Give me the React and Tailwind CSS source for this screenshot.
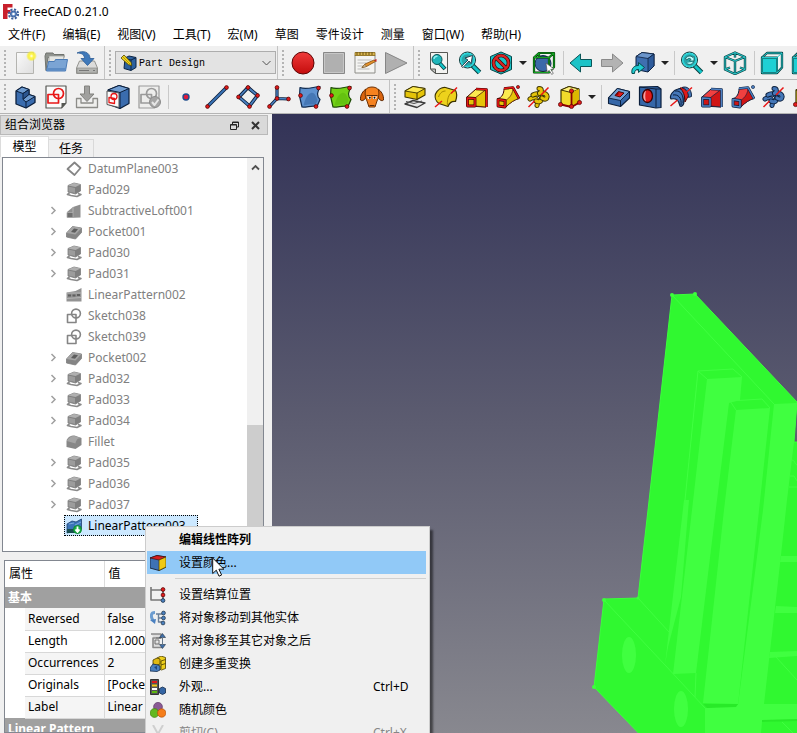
import React from "react";

/* ---------- icons ---------- */

const Svg = ({ children, s = 24, cls = "" }) => (
  <svg width={s} height={s} viewBox={`0 0 ${s} ${s}`} fill="none" strokeLinejoin="round" className={`block shrink-0 ${cls}`} aria-hidden="true">
    {children}
  </svg>
);

const Dot = ({ x, y, r = 1.9, f = "#e01b1b", s = "#4a0000" }) => (
  <circle cx={x} cy={y} r={r} fill={f} stroke={s} strokeWidth="0.7" />
);

const AppLogo = () => (
  <Svg s={16}>
    <path d="M0 0h9.500v3.500h-5v2.500h3v3.300h-3v5.700h-4.500z" fill="#c8202c" />
    <circle cx="10.500" cy="10" r="4.600" fill="none" stroke="#3c5f9c" strokeWidth="2" strokeDasharray="2.100 1.500" />
    <circle cx="10.500" cy="10" r="3" fill="#5f88c4" stroke="#355a99" />
    <circle cx="10.500" cy="10" r="1.300" fill="#fff" />
  </Svg>
);

const NewDoc = () => (
  <Svg>
    <defs>
      <linearGradient id="paper" x1="0" y1="0" x2="1" y2="1"><stop stopColor="#fafafa" /><stop offset="1" stopColor="#dedede" /></linearGradient>
      <radialGradient id="glow"><stop stopColor="#fffff0" /><stop offset=".35" stopColor="#fff64a" /><stop offset=".65" stopColor="#f7ee30" stopOpacity=".8" /><stop offset="1" stopColor="#f7ee30" stopOpacity="0" /></radialGradient>
    </defs>
    <path d="M3.500 1.500h17v21h-17z" fill="url(#paper)" stroke="#b4b4b0" />
    <circle cx="18.500" cy="5" r="5.500" fill="url(#glow)" />
  </Svg>
);

const Folder = () => (
  <Svg>
    <path d="M1 5l1-3h7l1 1.500h10v3h-16l-2 13z" fill="#8e918c" stroke="#70736e" />
    <path d="M5 5h15l-1 7h-14z" fill="#e4e5e2" stroke="#9a9c98" strokeWidth=".7" />
    <path d="M2.500 20l2-9.500h6l1-2h12l-2 11.500z" fill="#7ba4d4" stroke="#4a7ab5" />
    <path d="M3.500 17h18.300l-.6 2.400h-18z" fill="#5d8cc4" />
  </Svg>
);

const Save = () => (
  <Svg>
    <path d="M4.500 10h15l3 7v5.500h-21v-5.500z" fill="#dcdcdb" stroke="#94948f" />
    <path d="M2 17h20v5h-20z" fill="#b3b4b1" stroke="#8c8d89" strokeWidth=".7" />
    <path d="M4 19.500h10M18 19.500h2" stroke="#777" />
    <path d="M2 2c6-3 13-1 13 5.500h4l-6.500 7-6.500-7h3.500c0-4-3-5.500-7.500-5.500z" fill="#3f79ba" stroke="#2b5a94" strokeWidth=".8" />
  </Svg>
);

const Combo = () => (
  <Svg s={17}>
    <path d="M5 4l4-2 7 1.500v10l-5 3-7-2z" fill="#2d619f" stroke="#0b2444" />
    <path d="M11 6l5-2.300M11 6v10M11 6l-6-1.500" stroke="#0b2444" />
    <path d="M1 4l3-3 7 7.500.8 3-3.300-.8z" fill="#f4d61c" stroke="#4d4200" strokeWidth=".8" />
    <path d="M3 3l7 7" stroke="#9a8200" strokeWidth=".7" />
  </Svg>
);

const Record = () => (
  <Svg>
    <defs><linearGradient id="rec" x1="0" y1="0" x2="0" y2="1"><stop stopColor="#ef3b3b" /><stop offset="1" stopColor="#c40c0c" /></linearGradient></defs>
    <circle cx="12" cy="12" r="11" fill="url(#rec)" stroke="#5c0505" />
  </Svg>
);
const Stop = () => (
  <Svg><path d="M1.500 1.500h21v21h-21z" fill="#b0b0b0" stroke="#888" /><path d="M2.500 2.500h19v19h-19z" stroke="#c6c6c6" /></Svg>
);
const EditMacro = () => (
  <Svg>
    <path d="M2 4h20v18h-20z" fill="#f4f4f2" stroke="#8d8d88" />
    <path d="M2 1.500h20v3h-20z" fill="#d8b550" stroke="#8a6914" strokeWidth=".8" />
    <path d="M4 1v3M7 1v3M10 1v3M13 1v3M16 1v3M19 1v3" stroke="#6b5314" />
    <path d="M4.500 9h14M4.500 12h9M4.500 15h6M4.500 18h12" stroke="#bbb" />
    <path d="M9 16.500l3-3.500 9-4 1.500 1.500-9 5z" fill="#e8932a" stroke="#7d4a10" strokeWidth=".8" />
    <path d="M9 16.500l3-3 1.500 2z" fill="#f0d9b0" stroke="#6d542a" strokeWidth=".6" />
    <path d="M21 9l2.500-1v3z" fill="#cc1c1c" />
  </Svg>
);
const Play = () => (
  <Svg><path d="M1.500 1.500l21.500 10.500-21.500 10.500z" fill="#b0b0b0" stroke="#868686" /></Svg>
);

const Lens = ({ arrow, refresh }) => (
  <Svg>
    <path d="M14 14l7.500 7.500" stroke="#063c3d" strokeWidth="5" />
    <path d="M14 14l7.500 7.500" stroke="#12c4c8" strokeWidth="3" />
    <circle cx="9.500" cy="9" r="8" fill="#9adadb" stroke="#063c3d" strokeWidth="1" />
    <circle cx="9.500" cy="9" r="6.600" fill="#2aa5a9" stroke="#25d6da" strokeWidth="1.500" />
    {arrow && <path d="M3.500 15.500l6.500-6.500-3-2 7.500-2.500-1.500 8-2-2.500-6 6.500z" fill="#fff" stroke="#123" strokeWidth=".8" />}
    {refresh && <path d="M5.500 8c1-3 5-4 7.500-1.500l1-1v4.500h-4.500l1.500-1.700c-1.500-1.500-3.500-1-4 .7zM13.500 10.500c-1 3-4.500 4-7 1.500" fill="#bff" stroke="#0b5456" strokeWidth=".8" />}
  </Svg>
);

const FitAll = () => (
  <Svg>
    <path d="M3.500 1.500h17v21h-12l-5-4.500z" fill="#f3f3f1" stroke="#555753" />
    <path d="M3.500 18h5v4.500z" fill="#c0c1be" stroke="#555753" />
    <path d="M12.500 12l5.500 6" stroke="#063c3d" strokeWidth="4" />
    <path d="M12.500 12l5 5.500" stroke="#12c4c8" strokeWidth="2.400" />
    <circle cx="10" cy="8.500" r="5" fill="#1fb6ba" stroke="#0a5254" />
    <path d="M7 8a3.200 3.200 0 013.500-2.700" stroke="#96eef0" strokeWidth="1.300" />
  </Svg>
);

const DrawStyle = () => (
  <Svg>
    <path d="M12 1l10.500 4.500v13l-10.500 4.500-10.500-4.500v-13z" fill="#19c3c7" stroke="#064446" />
    <circle cx="12" cy="12" r="7.500" stroke="#3d0000" strokeWidth="3.600" />
    <path d="M6.500 6.500l11 11" stroke="#3d0000" strokeWidth="3.600" />
    <circle cx="12" cy="12" r="7.500" stroke="#d92626" strokeWidth="2.300" />
    <path d="M6.800 6.800l10.400 10.400" stroke="#d92626" strokeWidth="2.300" />
  </Svg>
);

const BoxSelect = () => (
  <Svg>
    <circle cx="11" cy="12.500" r="8" fill="#3b69a8" stroke="#0f2b52" />
    <path d="M2 6.500h15v15h-15zM2 6.500l5-4.500h15l-5 4.500M22 2v14l-5 5.500M7 2v4" stroke="#032b06" strokeWidth="2.200" />
    <path d="M2 6.500h15v15h-15zM2 6.500l5-4.500h15l-5 4.500M22 2v14l-5 5.500M7 2v4" stroke="#13a321" strokeWidth="1.200" />
    <path d="M14 12l8 6-3.200.4 2.500 4-1.600 1-2.500-4-2 1.800z" fill="#fff" stroke="#555" strokeWidth=".7" />
  </Svg>
);

const ArrowL = () => (
  <Svg><path d="M1 12l10.500-9v5.500h11v7h-11v5.500z" fill="#1cc3c7" stroke="#0a5557" /></Svg>
);
const ArrowR = () => (
  <Svg><path d="M23 12l-10.500-9v5.500h-11v7h11v5.500z" fill="#b3b3b3" stroke="#8a8a8a" /></Svg>
);

const LinkGo = () => (
  <Svg>
    <path d="M5 5.500l6-4 12 1.500v12l-6 6-12-2.500z" fill="#3f6fb0" stroke="#0c2140" />
    <path d="M5 5.500l6-4 12 1.500-6 4.500z" fill="#6b95cb" stroke="#0c2140" strokeWidth=".8" />
    <path d="M17 7.500l6-4.500v12l-6 6z" fill="#2f5c9c" stroke="#0c2140" strokeWidth=".8" />
    <path d="M1 22.500c-1-5 2-8 6.500-8v-3l6 5-6 5v-3c-3 0-4 1.500-4 4z" fill="#1ecbcf" stroke="#064c4e" />
  </Svg>
);

const IsoView = () => (
  <Svg>
    <path d="M12 1.500l10 4.500v12.500l-10 4.500-10-4.500v-12.500zM2 6l10 4 10-4M12 10v13M12 1.500v5M2 18.500l5-2M22 18.500l-5-2" stroke="#063c3d" strokeWidth="2.400" />
    <path d="M12 1.500l10 4.500v12.500l-10 4.500-10-4.500v-12.500zM2 6l10 4 10-4M12 10v13M12 1.500v5M2 18.500l5-2M22 18.500l-5-2" stroke="#2cc3c6" strokeWidth="1.100" />
  </Svg>
);
const FrontView = () => (
  <Svg>
    <path d="M2 6.500l5-4.500h15v14.500l-5 5.500h-15z" fill="#f0f6f6" stroke="#063c3d" strokeWidth="2.300" />
    <path d="M2 6.500h15v15.500h-15z" fill="#1fd0d4" stroke="#063c3d" strokeWidth="2" />
    <path d="M2 6.500l5-4.500h15v14.500l-5 5.500h-15zM2 6.500h15v15.500M17 6.500l5-4.500" stroke="#27c9cc" strokeWidth="1" />
  </Svg>
);

const Body = () => (
  <Svg>
    <path d="M3 6l6-4 7 2.500v5l6 2v6l-9 5.500-10-4z" fill="#3a6cae" stroke="#0b1f3c" strokeWidth="1.300" />
    <path d="M3 6l6-4 7 2.500-6 4z" fill="#6e9bd0" stroke="#0b1f3c" />
    <path d="M10 8.500v6l6-5v-5z" fill="#2c5690" stroke="#0b1f3c" />
    <path d="M10 14.500l6-5 6 2-9 5.500z" fill="#6e9bd0" stroke="#0b1f3c" />
    <path d="M13 17v6" stroke="#0b1f3c" />
  </Svg>
);

const SketchNew = ({ gray }) => (
  <Svg>
    <path d="M2 1h20v17l-4.500 5h-15.500z" fill={gray ? "#ededec" : "#fafafa"} stroke={gray ? "#999" : "#555753"} strokeWidth="1.200" />
    {!gray && <path d="M17.500 23v-5h4.500z" fill="#555753" />}
    <circle cx="14.500" cy="8.500" r="5" stroke={gray ? "#9a9a9a" : "#e81717"} strokeWidth="1.700" />
    <path d="M4 9.500h10.500v8.500h-10.500z" stroke={gray ? "#9a9a9a" : "#e81717"} strokeWidth="1.700" />
    {gray && <><circle cx="18" cy="17" r="5.500" fill="#a5a5a5" stroke="#8b8b8b" /><path d="M15 17l2.500 3 4-5.500" stroke="#e6e6e6" strokeWidth="2" /></>}
  </Svg>
);
const ImportIcon = () => (
  <Svg>
    <path d="M1.500 13.500h4.500v4.500h12v-4.500h4.500v9h-21z" fill="#eeeeec" stroke="#8c8c88" strokeWidth="1.300" />
    <path d="M9.500 1h5v8h4.500l-7 7.500-7-7.500h4.500z" fill="#a0a09e" stroke="#82827f" />
  </Svg>
);
const MapSketch = () => (
  <Svg>
    <path d="M2 5l11-4.500 10 3v15l-9 5-11-4z" fill="#3a6cae" stroke="#0b1f3c" strokeWidth="1.200" />
    <path d="M2 5l11-4.500 10 3-9 4z" fill="#709dd2" stroke="#0b1f3c" />
    <path d="M14 7.500v16" stroke="#0b1f3c" />
    <path d="M1 6l12 2v14.500l-12-3z" fill="#fafafa" stroke="#555" />
    <circle cx="8" cy="11.500" r="3" stroke="#e81717" strokeWidth="1.300" />
    <path d="M3 12.500l5.500 1v5l-5.500-1z" stroke="#e81717" strokeWidth="1.300" />
  </Svg>
);

const Point = () => (
  <Svg><circle cx="12" cy="12" r="3.700" fill="#1f4e8c" /><circle cx="12" cy="12" r="2.300" fill="#e01b3b" /></Svg>
);
const LineI = () => (
  <Svg>
    <path d="M3 21l18-18" stroke="#0b1f3c" strokeWidth="3.600" /><path d="M3 21l18-18" stroke="#3a74b8" strokeWidth="1.800" />
    <Dot x={2.500} y={21.500} /><Dot x={21.500} y={2.500} />
  </Svg>
);
const Plane = () => (
  <Svg>
    <path d="M12 2.500l9.500 8-8 10.500-10.500-9z" stroke="#0b1f3c" strokeWidth="3.600" /><path d="M12 2.500l9.500 8-8 10.500-10.500-9z" stroke="#4a80c0" strokeWidth="1.800" />
    <Dot x={12} y={2.500} /><Dot x={21.500} y={10.500} /><Dot x={13.500} y={21.500} /><Dot x={2.500} y={12} />
  </Svg>
);
const Axes = () => (
  <Svg>
    <path d="M10 2.500v11l11.500.500M10 13.500l-7.500 8" stroke="#0b1f3c" strokeWidth="3.200" /><path d="M10 2.500v11l11.500.500M10 13.500l-7.500 8" stroke="#4a80c0" strokeWidth="1.500" />
    <Dot x={10} y={2.500} /><Dot x={21.500} y={14} /><Dot x={2.500} y={21.500} /><Dot x={10} y={13.500} />
  </Svg>
);
const Binder = ({ green }) => (
  <Svg>
    <path d="M2 2.500c6 2.500 13-.5 20-1-2.500 6-4 9 0 13l-3 7c-5-1.500-10 1-15 .5l-2.500-11z" fill={green ? "#73d216" : "#5f92cf"} stroke={green ? "#1c4a04" : "#0f2a50"} strokeWidth="1.200" />
    <path d="M13 8c4-1 5 4 6.500 7l-2 5c-4-1-9 0-12 .5 1-4 3-11 7.500-12.500z" fill={green ? "#5cb80d" : "#3465a4"} opacity=".6" />
    <Dot x={2.500} y={10.500} /><Dot x={20.500} y={3} /><Dot x={18} y={21.500} />
  </Svg>
);
const Sheep = () => (
  <Svg>
    <path d="M6 4c-3 2-6 6-5.500 11 2 2 5-1 6.500-4zM18 4c3 2 6 6 5.500 11-2 2-5-1-6.500-4z" fill="#d9640f" stroke="#5c2804" />
    <path d="M5.500 5c2-4 11-4 13 0 1 4 0 8-1.500 11l-2 6h-6l-2-6c-1.500-3-2.500-7-1.500-11z" fill="#f58220" stroke="#6b3004" />
    <path d="M7 11.500h4v2.500h-3zM13 11.500h4l-1 2.500h-3z" fill="#fff" />
    <path d="M6.500 10.500h11" stroke="#5c2804" />
    <circle cx="9.800" cy="12.800" r="1" fill="#111" /><circle cx="14.500" cy="12.800" r="1" fill="#111" />
    <path d="M9.500 20.500h5" stroke="#5c2804" />
  </Svg>
);

const Pad = () => (
  <Svg>
    <path d="M2 19l8-3.500 12 2.500-8 4.500z" fill="#e6e6e6" stroke="#3b3b3b" strokeWidth="1.400" />
    <path d="M3 16.500l8 2 8-2.500" stroke="#555" strokeWidth="1.200" />
    <path d="M2 6l8-4.500 12 2v6.500l-8 4.500-12-2.500z" fill="#e5c409" stroke="#3c3300" strokeWidth="1.100" />
    <path d="M2 6l8-4.500 12 2-8 4.500z" fill="#fce94f" stroke="#3c3300" strokeWidth=".9" /><path d="M14 8v6.500" stroke="#3c3300" />
  </Svg>
);
const Revolve = () => (
  <Svg>
    <path d="M1.500 9c2-4 6-7 10-6.500l10 3c2 3 1 8 0 11-4-.5-6 1-7.500 5l-9-3c-3-2-4.500-6-3.500-9.500z" fill="#edd21c" stroke="#3c3300" strokeWidth="1.200" />
    <path d="M11.500 6c-4 0-6 3-7 6M21.500 6c-5 0-9 6-8 15" stroke="#a68b00" />
    <path d="M1 22l7-6M17 8.500l6-6" stroke="#e81717" strokeWidth="1.500" />
  </Svg>
);
const Loft = ({ c = "#e5c409", hi = "#fce94f", e = "#e81717", k = "#3c0000" }) => (
  <Svg>
    <path d="M2 12l9-8 10 .5v17.500l-19-1z" fill={hi} stroke={k} />
    <path d="M10 13l11-8.500v17.500l-11-1z" fill={c} />
    <path d="M10 13l11-8.500M10 21l11 1" stroke={k} strokeWidth=".7" />
    <path d="M11 4l10.500.5v17.500" stroke={k} strokeWidth="2.600" /><path d="M11 4l10.500.5v17.500" stroke={e} strokeWidth="1.500" />
    <path d="M2.500 13l7.500.5v7.500h-7.500z" stroke={k} strokeWidth="2.800" fill={c} /><path d="M2.500 13l7.500.5v7.500h-7.500z" stroke={e} strokeWidth="1.600" />
  </Svg>
);
const Pipe = ({ c = "#e5c409", hi = "#fce94f", e = "#e81717", k = "#3c0000" }) => (
  <Svg>
    <path d="M8 3.500l9-1 6 11c-4 1-9 4-13 8.500l-8-8.500c4-1 6-5 6-10z" fill={hi} stroke={k} />
    <path d="M17 2.500l6 11c-4 1-9 4-13 8.500v-7c4-2 7-7 7-12.500z" fill={c} stroke={k} strokeWidth=".6" />
    <path d="M8 3.500l9-1 6 11" stroke={k} strokeWidth="2.600" /><path d="M8 3.500l9-1 6 11" stroke={e} strokeWidth="1.500" />
    <path d="M2 14.500l7 1v6.500l-7-1z" fill={c} stroke={k} strokeWidth="2.800" /><path d="M2 14.500l7 1v6.500l-7-1z" stroke={e} strokeWidth="1.600" />
    <circle cx="22" cy="2" r="1.600" fill={e} stroke={k} strokeWidth=".6" />
  </Svg>
);
const Helix = ({ c = "#e5c409", k = "#3c3300" }) => {
  const coils = ["M3 14c4-3 9 0 7 6.500", "M6 10c5-3 11 1 8 5.500-1 1.500-3 1.500-5 .5", "M12 3.500c3 0 3 3 .5 5M12.500 8c5-1 9 2 7 5.500-1 1-3 .5-4.500-.5"];
  return (
    <Svg>
      {coils.map((d) => (
        <g key={d} strokeLinecap="round"><path d={d} stroke={k} strokeWidth="5" /><path d={d} stroke={c} strokeWidth="3.200" /></g>
      ))}
      <path d="M1.500 22l6-6M14 10l7.500-7.500" stroke="#e81717" strokeWidth="1.500" />
    </Svg>
  );
};
const PrimBox = () => (
  <Svg>
    <path d="M3 5l8-3.500 10 2.500v14l-8 4-10-2.500z" fill="#f2da2b" stroke="#3c3300" strokeWidth="1.200" />
    <path d="M3 5l8-3.500 10 2.500-8 3.500z" fill="#fdf07a" stroke="#3c3300" /><path d="M13 7.500l8-3.500v14l-8 4z" fill="#dcb900" />
    <path d="M13.500 6v15M3 19.500l10.500 2.500 8-4.500" stroke="#8b0000" strokeWidth="1.800" />
    <Dot x={13.500} y={6} r={2.100} /><Dot x={2.500} y={19.500} r={2.100} /><Dot x={13.500} y={21.500} r={2.100} /><Dot x={21.500} y={17.500} r={2.100} />
  </Svg>
);
const PocketI = () => (
  <Svg>
    <path d="M1.500 13l9-9.500 12 3v6.500l-9 8.500-12-3z" fill="#3667a8" stroke="#0b1f3c" strokeWidth="1.100" />
    <path d="M1.500 13l9-9.500 12 3-9 9z" fill="#739fd3" stroke="#0b1f3c" strokeWidth=".9" /><path d="M13.500 15.500v6" stroke="#0b1f3c" />
    <path d="M8 10.500l3.500-4 5.500 1.500-4 4z" fill="#e01b1b" stroke="#3c0000" strokeWidth=".9" /><path d="M8 10.500l3.500-4v3z" fill="#8b0000" />
  </Svg>
);
const Hole = () => (
  <Svg>
    <path d="M1.500 2l18-.5 3.500 2.500v18.500l-5 .5-16.500-3z" fill="#3667a8" stroke="#0b1f3c" strokeWidth="1.200" />
    <path d="M18 4v18.500M1.500 2l16.500 2h5" stroke="#0b1f3c" />
    <ellipse cx="9.500" cy="11" rx="5" ry="6.500" fill="#e01b1b" stroke="#3c0000" strokeWidth="1.300" /><path d="M8 5.500c-3 2-4 9 0 11-1-4-1-7 0-11z" fill="#fff" opacity=".6" />
  </Svg>
);
const Groove = () => (
  <Svg>
    <path d="M9 4c3-1 6 1 7 4l-1 8c0 4-2 6-4 5-1-6-4-8-9-7-2-3 2-9 7-10z" fill="#4577b8" stroke="#0b1f3c" strokeWidth="1.200" />
    <path d="M4 10c5-1 9 3 8 10M6 6c6-1 9 5 8 12" stroke="#0b1f3c" />
    <path d="M11 3c4-1 8 1 9 7l-4 7c0-7-2-11-5-14z" fill="#e01b1b" stroke="#4a0000" strokeWidth=".9" />
    <path d="M13 2.500c5-2 10 2 9.500 9l-3 1c0-5-2-8-6.500-10z" fill="#4577b8" stroke="#0b1f3c" strokeWidth=".9" />
    <path d="M1.500 21l7-6M17 7.500l6-5" stroke="#e81717" strokeWidth="1.500" />
  </Svg>
);

/* ---------- small tree icons ---------- */

const T = ({ k }) => {
  const st = "#7d7d7d";
  const kinds = {
    plane: <path d="M8.500 1.500l6 5.500-6 7-7-6z" stroke="#858585" strokeWidth="1.800" />,
    pad: (
      <>
        <path d="M3.500 11l-2 1.500 3.500 1 6 1 4-2-3-1" stroke="#8a8a8a" strokeWidth="1.600" />
        <path d="M2 3.500l6-2.500 6.500 1.500v6.500l-5 3-7.500-2z" fill="#7f7f7f" stroke={st} strokeWidth=".8" />
        <path d="M2 3.500l6-2.500 6.500 1.500-5 2.500z" fill="#b0b0b0" /><path d="M2.500 4.500l6.500 1.500v5l-6.500-1.500z" fill="#9c9c9c" />
      </>
    ),
    loft: <><path d="M1 9l6-5 7.500-2.500v13l-13 .500z" fill="#8f8f8f" /><path d="M1 9.500h6v5h-6z" fill="#6f6f6f" stroke="#adadad" strokeWidth=".8" /><path d="M7 4v5.500" stroke="#b4b4b4" /></>,
    pocket: (
      <>
        <path d="M.5 9l6-6.500 9 1.500v4.500l-6 6.500-9-2z" fill="#858585" stroke={st} strokeWidth=".8" />
        <path d="M.5 9l6-6.500 9 1.500-6 6.500z" fill="#a5a5a5" /><path d="M5 8l3-3.500 4 .8-3 3.500z" fill="#5d5d5d" />
      </>
    ),
    pattern: (
      <>
        <path d="M.5 5.500l9-1.500 6-3v13.500h-15z" fill="#939393" />
        <path d="M1 6h14M1 11.500l14-1" stroke="#b4b4b4" />
        <path d="M2 8.500h3M6.500 8.500h3M11 8h3" stroke="#5f5f5f" strokeWidth="2" />
      </>
    ),
    sketch: <><circle cx="10" cy="5.500" r="4.400" stroke="#858585" strokeWidth="1.600" /><path d="M1.500 6.500h8.500v8h-8.500z" stroke="#858585" strokeWidth="1.600" /></>,
    fillet: <><path d="M.5 7c1-4 4-5.500 8-5.500l7 2.500v7l-6 4-9-2z" fill="#878787" /><path d="M.8 7c1.500-3 4-5 7.700-5l6.500 2c-4 0-5 3-5.500 5.500z" fill="#a5a5a5" /></>,
    active: (
      <>
        <path d="M1 6l5-3 4 1 5.500-3v10l-14.500 4z" fill="#3a74b8" stroke="#1d3f70" strokeWidth=".8" />
        <path d="M1 11h9v4h-9z" fill="#184f52" /><path d="M3 6l5-1M9 7l6-3" stroke="#7aa8dc" />
        <circle cx="11.500" cy="11.500" r="4" fill="#1cae45" stroke="#0d8a30" /><path d="M11.500 8.500v5M9.500 11.500l2 2.500 2-2.500" stroke="#fff" strokeWidth="1.800" />
      </>
    ),
  };
  return <Svg s={16}>{kinds[k]}</Svg>;
};

/* ---------- context-menu icons ---------- */

const menuIcons = {
  color: <><path d="M0 3l7-2.500 9 1.500v10l-7 3.500-9-2.500z" fill="#3e72b4" stroke="#1b2c45" /><path d="M0 3l7-2.500 9 1.500-7 3z" fill="#d81e1e" stroke="#451010" strokeWidth=".7" /><path d="M9 5l7-3v10l-7 3.500z" fill="#f0c914" stroke="#4a3c00" strokeWidth=".7" /></>,
  tip: <><path d="M1 0v3M1 3h11M1 3v10h10" stroke="#777" strokeWidth="1.600" /><path d="M13 2v11" stroke="#555" strokeWidth="1.400" /><Dot x={13} y={2.500} /><Dot x={13} y={8} /><Dot x={13} y={13.500} f="#4a80c0" s="#123" /></>,
  move: <><path d="M5 2.500c-5 0-4 5-2 8" stroke="#6d9dd0" strokeWidth="3" /><path d="M0 10l6-1-1 5z" fill="#4a80c0" /><path d="M6 4h6M8.500 4v8h4M8.500 8h4" stroke="#6a7f98" strokeWidth="1.400" /><Dot x={13.500} y={3} f="#4a80c0" s="#234" /><Dot x={13.500} y={8} f="#4a80c0" s="#234" /><Dot x={13} y={13} f="#4a80c0" s="#234" /></>,
  after: <><path d="M1 1h10v4h-8v9.500h9" stroke="#8a8a8a" strokeWidth="1.600" fill="#ddd" /><path d="M5 7h4v4h-4zM6 5h5" stroke="#707070" /><path d="M12.500.5l3 4h-6zM12.500 15.500l3-4h-6z" fill="#3f6ea8" stroke="#234" strokeWidth=".6" /><path d="M12.500 4v8" stroke="#678" /></>,
  multi: <><path d="M7 2l4-2 4.500 1.500v11l-4 1.500-5-2z" fill="#edcf1c" stroke="#4a3c00" strokeWidth=".8" /><path d="M3 4l4-2 3 1v5l-4 1.500-3-1.500z" fill="#e0b912" stroke="#4a3c00" strokeWidth=".8" /><path d="M11 5l4.500-1.500M11 9l4.500-1.500M11 5v8" stroke="#4a3c00" strokeWidth=".8" /><path d="M0 12l3-4 5 1 2 1v4l-3 1.500-7-.5z" fill="#4a80c0" stroke="#12294a" strokeWidth=".8" /><path d="M4 11l3-1v4z" fill="#1f477c" /></>,
  look: <><path d="M.5.5h8v15h-8z" fill="#555" stroke="#333" /><path d="M2 3h5" stroke="#e01b1b" strokeWidth="2" /><path d="M2 6.500h5" stroke="#f0c914" strokeWidth="2" /><path d="M2 10h5" stroke="#fff" strokeWidth="2" /><path d="M2 13h5" stroke="#5cb80d" strokeWidth="2" /><path d="M9.500 9.500l3-1.500 3 1.500v4.500l-3 1.500-3-1.500z" fill="#3465a4" stroke="#12294a" strokeWidth=".8" /></>,
  random: <><circle cx="8" cy="4.800" r="4.400" fill="#8a5a94" stroke="#5c3566" strokeWidth=".7" /><circle cx="4.500" cy="11" r="4.400" fill="#63b820" stroke="#3f7d0c" strokeWidth=".7" /><circle cx="11.700" cy="11" r="4.200" fill="#f57d1a" stroke="#b5520a" strokeWidth=".7" /></>,
  cut: <><path d="M3 0l5 9M13 0l-5 9" stroke="#cfcfcf" strokeWidth="2" /><circle cx="4.500" cy="12" r="2.500" stroke="#b5b5b5" strokeWidth="1.500" /><circle cx="11.500" cy="12" r="2.500" stroke="#b5b5b5" strokeWidth="1.500" /></>,
};

/* ---------- toolbar parts ---------- */

const Handle = () => (
  <span className="flex w-[10px] shrink-0 items-center justify-center">
    <svg width="3" height="26" viewBox="0 0 3 26" className="block" aria-hidden="true">
      {[0, 4, 8, 12, 16, 20, 24].map((y) => <path key={y} d={`M0 ${y}h2v2h-2z`} fill="#b4b4b4" />)}
    </svg>
  </span>
);

const Sep = () => (
  <span className="flex w-[6px] shrink-0 items-center justify-center">
    <span className="h-6 w-px bg-[#c9c9c9]" />
  </span>
);

const Tool = ({ label, children, off }) => (
  <button type="button" aria-label={label} disabled={off} className="flex w-[31px] shrink-0 items-center pl-[3px]">
    {children}
  </button>
);

const Drop = ({ label }) => (
  <button type="button" aria-label={label} className="flex w-[12px] shrink-0 items-center justify-center">
    <svg width="8" height="4" viewBox="0 0 8 4" className="block" aria-hidden="true"><path d="M0 0h8l-4 4z" fill="#222" /></svg>
  </button>
);

const Group = ({ children, last }) => (
  <div className={last ? "flex min-w-0 flex-1 overflow-hidden" : "flex shrink-0 border-r border-[#c3c3c3] pr-px"}>
    <Handle />
    {children}
  </div>
);

const menus = ["文件(F)", "编辑(E)", "视图(V)", "工具(T)", "宏(M)", "草图", "零件设计", "测量", "窗口(W)", "帮助(H)"];

const tree = [
  ["DatumPlane003", "plane", false],
  ["Pad029", "pad", false],
  ["SubtractiveLoft001", "loft", true],
  ["Pocket001", "pocket", true],
  ["Pad030", "pad", true],
  ["Pad031", "pad", true],
  ["LinearPattern002", "pattern", false],
  ["Sketch038", "sketch", false],
  ["Sketch039", "sketch", false],
  ["Pocket002", "pocket", true],
  ["Pad032", "pad", true],
  ["Pad033", "pad", true],
  ["Pad034", "pad", true],
  ["Fillet", "fillet", false],
  ["Pad035", "pad", true],
  ["Pad036", "pad", true],
  ["Pad037", "pad", true],
  ["LinearPattern003", "active", false],
];

const properties = [
  ["Reversed", "false"],
  ["Length", "12.0000"],
  ["Occurrences", "2"],
  ["Originals", "[Pocket]"],
  ["Label", "Linear"],
];

const actions = [
  ["设置结算位置", "tip", ""],
  ["将对象移动到其他实体", "move", ""],
  ["将对象移至其它对象之后", "after", ""],
  ["创建多重变换", "multi", ""],
  ["外观...", "look", "Ctrl+D"],
  ["随机颜色", "random", ""],
  ["剪切(C)", "cut", "Ctrl+X"],
];

const MenuRow = ({ text, icon, keys = "", look = "" }) => (
  <li>
    <button type="button" disabled={icon === "cut"} className={`flex h-[23px] w-full items-center pl-[3px] text-left disabled:text-[#868686] ${look}`}>
      <span className="w-[29px] shrink-0">{icon && <Svg s={16}>{menuIcons[icon]}</Svg>}</span>
      <span className="flex-1 whitespace-nowrap">{text}</span>
      {keys && <span className="w-[53px]">{keys}</span>}
    </button>
  </li>
);

function ModelTree() {
  return (
    <div className="mr-[8px] ml-[2px] flex shrink-0 border border-[#828790] bg-white">
      <ul className="min-w-0 flex-1 pb-[15px]">
        {tree.map(([name, kind, expandable]) => {
          const active = kind === "active";
          return (
            <li key={name} className="flex h-[21px] items-center pl-[47px]">
              <span className="w-[14px] shrink-0">
                {expandable && (
                  <svg width="7" height="9" viewBox="0 0 7 9" fill="none" className="block" aria-hidden="true">
                    <path d="M1.500 1l3.500 3.500-3.500 3.500" stroke="#a0a0a0" strokeWidth="1.500" />
                  </svg>
                )}
              </span>
              <span
                className={
                  active
                    ? "flex h-full items-center gap-[6px] border border-dotted border-black bg-[#cce8ff] pr-[11px] pl-px text-black"
                    : "flex h-full items-center gap-[6px] pl-[2px] text-[#808080]"
                }
              >
                <T k={kind} />
                {name}
              </span>
            </li>
          );
        })}
      </ul>
      <div className="flex w-[16px] shrink-0 flex-col items-center bg-[#f0f0f0]">
        <svg width="9" height="21" viewBox="0 0 9 21" fill="none" className="block" aria-hidden="true">
          <path d="M1 11.500l3.500-3.500 3.500 3.500" stroke="#505050" strokeWidth="1.800" />
        </svg>
        <div className="mt-auto h-[126px] w-full bg-[#cdcdcd]" />
      </div>
    </div>
  );
}

function PropertyTable() {
  return (
    <div className="mt-[8px] mr-[8px] ml-[4px] min-h-0 flex-1 overflow-hidden border border-[#828790] bg-white">
      <table className="w-full table-fixed border-collapse text-black">
        <colgroup>
          <col className="w-[20px]" />
          <col className="w-[79px]" />
          <col />
        </colgroup>
        <thead>
          <tr className="h-[26px]">
            <th colSpan={2} className="border-r border-[#dcdcdc] py-0 pl-[4px] text-left font-normal">属性</th>
            <th className="py-0 pl-[4px] text-left font-normal">值</th>
          </tr>
        </thead>
        <tbody>
          <tr className="h-[21px] bg-[#a0a0a0] text-white">
            <th colSpan={3} className="py-0 pl-[3px] text-left font-bold">基本</th>
          </tr>
          {properties.map(([name, value], i) => (
            <tr key={name} className="h-[22px]">
              <td />
              <td className={`border-r border-b border-[#d8d8d8] py-0 pl-[3px] ${i % 2 ? "bg-white" : "bg-[#f5f5f5]"}`}>{name}</td>
              <td className={`border-b border-[#d8d8d8] py-0 pl-[3px] whitespace-nowrap ${i % 2 ? "bg-white" : "bg-[#f5f5f5]"}`}>{value}</td>
            </tr>
          ))}
          <tr className="h-[22px] bg-[#a0a0a0] text-white">
            <th colSpan={3} className="py-0 pl-[3px] text-left font-bold">Linear Pattern</th>
          </tr>
        </tbody>
      </table>
    </div>
  );
}

function Scene() {
  const dark = "#30f830";
  const light = "#40ff40";
  return (
    <svg className="block h-full w-full" role="img" aria-label="3D view">
      <g transform="translate(-272 -114)">
        <path d="M672 295L695 294L797 402L794 442H900V800H703L594 687L604 599L638 598L648 510Z" fill={dark} stroke="#3cff3c" />
        <path d="M774 404L797 403L794 442L787 500L781 555L764 704L797 706V720L762 722L761 733H705V708L738 705L763 510Z" fill={light} />
        <path d="M707 379L742 377L740 400L729 403L717 500L696 673L673 674L692 510Z" fill={light} />
        <path d="M736 410L770 408L759 510L738 704L703 703L724 510Z" fill={light} />
        <path d="M684 500H689L681 597L668 647L665 665Z" fill={light} />
        <path d="M781 556L797 556V562L780 562ZM776 606L797 607V613L775 613ZM770 652L797 651V656L769 658ZM764 704L797 704V720H763Z" fill={light} />
        <path d="M672 295L774 404M698 371L733 369L742 377M698 371L707 379M698 371L684 510M730 401L762 399L770 408M730 401L736 410M604 600L665 665L705 708M638 598L669 632M696 673L695 697M776 657L797 680M782 722L793 733" stroke={light} fill="none" />
        <path d="M703 704L738 704L736 707L707 708ZM762 720L797 719V721L762 722Z" fill="#28ea28" />
        <path d="M792 460c3 0 3 5 5 5M790 476h4l3 5M789 487h8" stroke={light} fill="none" />
        <ellipse cx="629" cy="655" rx="7" ry="18" fill={light} />
        <ellipse cx="681" cy="709" rx="7" ry="18" fill={light} />
        <g fill="#3cff3c">
          <circle cx="672" cy="295" r="2" /><circle cx="695" cy="294" r="2" /><circle cx="604" cy="600" r="2" /><circle cx="594" cy="687" r="2" /><circle cx="638" cy="598" r="1.500" />
        </g>
      </g>
    </svg>
  );
}

export default function App() {
  return (
    <div className="relative flex h-screen flex-col overflow-hidden bg-[#f0f0f0] font-['Noto_Sans','Noto_Sans_CJK_SC',sans-serif] text-[12px] leading-[16px] text-black">
      <header className="shrink-0 bg-white">
        <div className="flex h-[23px] items-center gap-[4px] pl-[3px]">
          <AppLogo />
          <h1>FreeCAD 0.21.0</h1>
        </div>
        <nav className="flex h-[23px] items-center gap-[17px] overflow-hidden pl-[8px]">
          {menus.map((m) => (
            <button key={m} type="button" className="shrink-0">{m}</button>
          ))}
        </nav>
      </header>

      <div className="flex h-[34px] shrink-0 border-b border-[#b9b9b9]">
        <Group>
          <Tool label="新建"><NewDoc /></Tool>
          <Tool label="打开"><Folder /></Tool>
          <Tool label="保存"><Save /></Tool>
        </Group>
        <Group>
          <div className="relative my-auto flex h-[23px] w-[161px] items-center border border-[#adadad] bg-[#e3e3e3] pl-[4px]">
            <Combo />
            <select aria-label="工作台" className="h-full min-w-0 flex-1 appearance-none bg-transparent pt-[2px] pl-[2px] font-['Liberation_Mono','Noto_Sans_CJK_SC',monospace] text-[10px]">
              <option>Part Design</option>
            </select>
            <svg width="9" height="6" viewBox="0 0 9 6" fill="none" className="pointer-events-none mr-[4px] block" aria-hidden="true">
              <path d="M.5 1l4 4 4-4" stroke="#505050" />
            </svg>
          </div>
        </Group>
        <Group>
          <Tool label="录制宏"><Record /></Tool>
          <Tool label="停止录制" off><Stop /></Tool>
          <Tool label="宏"><EditMacro /></Tool>
          <Tool label="执行宏" off><Play /></Tool>
        </Group>
        <Group last>
          <Tool label="显示全部"><FitAll /></Tool>
          <Tool label="适合选择"><Lens arrow /></Tool>
          <Tool label="显示样式"><DrawStyle /></Tool>
          <Drop label="显示样式选项" />
          <Tool label="框选"><BoxSelect /></Tool>
          <Sep />
          <Tool label="后退"><ArrowL /></Tool>
          <Tool label="前进" off><ArrowR /></Tool>
          <Tool label="转到链接对象"><LinkGo /></Tool>
          <Drop label="链接选项" />
          <Sep />
          <Tool label="同步视图"><Lens refresh /></Tool>
          <Drop label="视图选项" />
          <Tool label="等轴测"><IsoView /></Tool>
          <Sep />
          <Tool label="前视"><FrontView /></Tool>
          <Tool label="俯视"><FrontView /></Tool>
        </Group>
      </div>

      <div className="flex h-[34px] shrink-0 border-b border-[#b4b4b4]">
        <Group>
          <Tool label="创建实体"><Body /></Tool>
          <Tool label="创建草图"><SketchNew /></Tool>
          <Tool label="编辑草图" off><ImportIcon /></Tool>
          <Tool label="映射草图"><MapSketch /></Tool>
          <Tool label="验证草图" off><SketchNew gray /></Tool>
          <Sep />
          <Tool label="基准点"><Point /></Tool>
          <Tool label="基准线"><LineI /></Tool>
          <Tool label="基准面"><Plane /></Tool>
          <Tool label="局部坐标系"><Axes /></Tool>
          <Tool label="形状绑定"><Binder /></Tool>
          <Tool label="子形状绑定"><Binder green /></Tool>
          <Tool label="克隆"><Sheep /></Tool>
        </Group>
        <Group last>
          <Tool label="凸台"><Pad /></Tool>
          <Tool label="旋转"><Revolve /></Tool>
          <Tool label="放样"><Loft /></Tool>
          <Tool label="扫掠"><Pipe /></Tool>
          <Tool label="螺旋"><Helix /></Tool>
          <Tool label="附加图元"><PrimBox /></Tool>
          <Drop label="图元选项" />
          <Sep />
          <Tool label="凹槽"><PocketI /></Tool>
          <Tool label="孔"><Hole /></Tool>
          <Tool label="旋转槽"><Groove /></Tool>
          <Tool label="减料放样"><Loft c="#d01515" hi="#f04040" e="#4f82c4" k="#0b1f3c" /></Tool>
          <Tool label="减料扫掠"><Pipe c="#d01515" hi="#f04040" e="#4f82c4" k="#0b1f3c" /></Tool>
          <Tool label="减料螺旋"><Helix c="#4577b8" k="#0b1f3c" /></Tool>
          <Tool label="减料图元"><PrimBox /></Tool>
        </Group>
      </div>

      <main className="flex min-h-0 flex-1">
        <aside className="flex w-[272px] shrink-0 flex-col overflow-hidden pt-px">
          <div className="mr-[4px] flex h-[20px] shrink-0 items-center border border-[#b9b9b9] bg-[#d9d9d9] pl-[4px]">
            <h2 className="flex-1">组合浏览器</h2>
            <button type="button" aria-label="浮动" className="mr-[12px]">
              <svg width="9" height="9" viewBox="0 0 9 9" fill="none" className="block" aria-hidden="true">
                <path d="M2.500 3v-2h6v5h-2M.5 3.500h6v5h-6zM.5 4h6M2.500 1.500h6" stroke="#222" />
              </svg>
            </button>
            <button type="button" aria-label="关闭" className="mr-[7px]">
              <svg width="9" height="9" viewBox="0 0 9 9" fill="none" className="block" aria-hidden="true">
                <path d="M1 1l7 7M8 1l-7 7" stroke="#333" strokeWidth="2" />
              </svg>
            </button>
          </div>
          <div className="flex h-[22px] shrink-0 items-end pt-px">
            <button type="button" className="h-[21px] w-[49px] border border-b-0 border-[#dcdcdc] bg-white">模型</button>
            <button type="button" className="h-[18px] w-[45px] border border-b-0 border-l-0 border-[#d9d9d9]">任务</button>
          </div>
          <ModelTree />
          <PropertyTable />
        </aside>
        <section className="min-w-0 flex-1 bg-linear-to-b from-[#333357] via-[#5c5c70] to-[#88888f]">
          <Scene />
        </section>
      </main>

      <ul className="absolute top-[526px] left-[145px] w-[285px] border border-[#ccc] bg-[#f0f0f0] pt-px pr-[3px] pl-px shadow-[3px_4px_2px_rgba(0,0,0,0.5)]">
        <MenuRow text="编辑线性阵列" look="font-bold" />
        <MenuRow text="设置颜色..." icon="color" look="bg-[#91c9f7]" />
        <li className="flex h-[9px] items-center pl-[28px]"><hr className="w-full border-[#d0d0d0]" /></li>
        {actions.map(([text, icon, keys]) => (
          <MenuRow key={text} text={text} icon={icon} keys={keys} />
        ))}
      </ul>

      <svg width="13" height="21" viewBox="0 0 13 21" className="pointer-events-none absolute top-[557px] left-[212px]" aria-hidden="true">
        <path d="M.7 1v15.500l3.600-3.300 2.700 6 2.600-1.200-2.700-5.800h5z" fill="#fff" stroke="#111" />
      </svg>
    </div>
  );
}
